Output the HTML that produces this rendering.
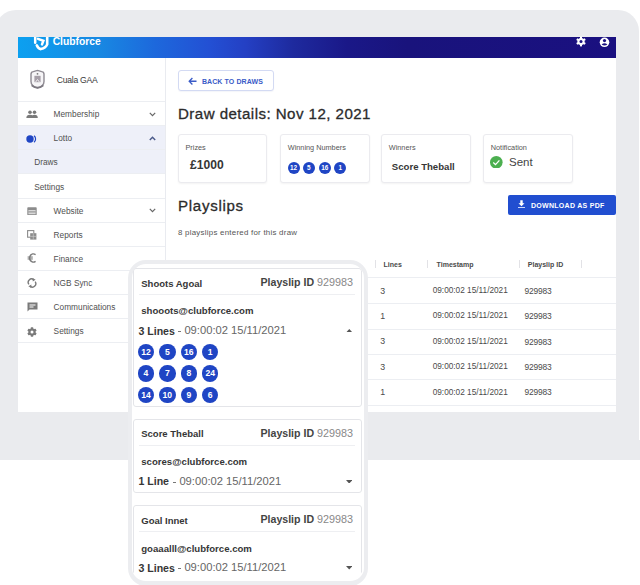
<!DOCTYPE html>
<html><head><meta charset="utf-8">
<style>
*{margin:0;padding:0;box-sizing:border-box}
html,body{width:640px;height:585px;overflow:hidden;background:#fff;font-family:"Liberation Sans",sans-serif;color:#333;position:relative}
.a{position:absolute}
.t{position:absolute;line-height:1;white-space:nowrap}
.ball{position:absolute;border-radius:50%;background:#1f45c4;color:#fff;font-weight:bold;text-align:center}
</style></head><body>
<div class="a" style="left:-5.00px;top:10.00px;width:644.00px;height:450.00px;background:#eaebee;border-radius:21px 21px 0 0"></div>
<div class="a" style="left:0.00px;top:440.00px;width:640.00px;height:20.00px;background:#eaebee"></div>
<div class="a" style="left:18.00px;top:37.00px;width:598.00px;height:375.00px;background:#fff"></div>
<div class="a" style="left:18.00px;top:37.00px;width:598.00px;height:21.00px;background:linear-gradient(90deg,#0ca0f0 0%,#1888e2 13.7%,#1d68dc 23%,#2350d4 32%,#2440c4 38%,#1e2a9e 46%,#1a1888 55%,#19137c 65%,#1a1080 100%)"></div>
<div class="a" style="left:18px;top:37px;width:598px;height:21px;overflow:hidden">
<svg class="a" style="left:10px;top:0px" width="25" height="15" viewBox="28 37 25 15"><g fill="none" stroke="#fff" stroke-linecap="round"><path d="M35.2 36 V42.8" stroke-width="2.5"/><path d="M36.8 45.4 Q38.6 49 40.8 49.1 Q46 47.8 47.2 44.4 V36" stroke-width="2.6"/><path d="M38 38.8 L43.4 40.8 L42 44.4" stroke-width="2.5"/></g></svg>
</div>
<div class="t" style="left:52.70px;top:36.88px;font-size:10.3px;font-weight:bold;color:#fff;">Clubforce</div>
<svg class="a" style="left:575.50px;top:36.00px" width="10" height="11" viewBox="0 0 10 11"><g fill="#fff"><circle cx="5" cy="5.5" r="3.6"/><rect x="4" y="0.6" width="2" height="9.8"/><rect x="4" y="0.6" width="2" height="9.8" transform="rotate(60 5 5.5)"/><rect x="4" y="0.6" width="2" height="9.8" transform="rotate(-60 5 5.5)"/></g><circle cx="5" cy="5.5" r="1.5" fill="#1a1080"/></svg>
<svg class="a" style="left:599.00px;top:36.50px" width="11" height="11" viewBox="0 0 11 11"><circle cx="5.5" cy="5.3" r="4.8" fill="#fff"/><circle cx="5.5" cy="3.6" r="1.6" fill="#1a1080"/><path d="M2.6 7.6 Q5.5 5 8.4 7.6 Q5.5 9.6 2.6 7.6Z" fill="#1a1080"/></svg>
<div class="a" style="left:165.00px;top:58.00px;width:1.00px;height:354.00px;background:#e9ebf0"></div>
<div class="a" style="left:18.00px;top:101.00px;width:147.00px;height:1.00px;background:#eceef2"></div>
<svg class="a" style="left:28px;top:68px" width="20" height="23" viewBox="28 68 20 23"><path d="M31 74.2 Q31 71.8 33.3 71.6 L37.5 70.4 L41.7 71.6 Q44 71.8 44 74.2 V81.5 Q44 86 37.5 88.2 Q31 86 31 81.5 Z" fill="#f6f5f7" stroke="#8e8a92" stroke-width="1.4"/><rect x="34.4" y="75.8" width="6.2" height="6.4" fill="#a69fa8"/><path d="M35.5 82.2 L37.5 79.5 L39.5 82.2" fill="none" stroke="#f6f5f7" stroke-width="0.9"/><circle cx="37.5" cy="73.8" r="0.9" fill="#777"/><path d="M31.6 85.4 Q37.5 90 43.4 85.4" fill="none" stroke="#7c7880" stroke-width="1.7"/></svg>
<div class="t" style="left:56.75px;top:75.92px;font-size:8.6px;color:#3a3a3a;letter-spacing:-0.25px">Cuala GAA</div>
<div class="a" style="left:18.00px;top:125.70px;width:147.00px;height:48.20px;background:#eef0f9"></div>
<div class="a" style="left:18.00px;top:125.20px;width:147.00px;height:1.00px;background:#eceef2"></div>
<div class="t" style="left:53.60px;top:110.27px;font-size:8.3px;color:#505050;">Membership</div>
<div class="a" style="left:18.00px;top:149.30px;width:147.00px;height:1.00px;background:#eceef2"></div>
<div class="t" style="left:53.60px;top:134.37px;font-size:8.3px;color:#505050;">Lotto</div>
<div class="a" style="left:18.00px;top:173.40px;width:147.00px;height:1.00px;background:#eceef2"></div>
<div class="t" style="left:34.20px;top:158.47px;font-size:8.3px;color:#505050;">Draws</div>
<div class="a" style="left:18.00px;top:197.50px;width:147.00px;height:1.00px;background:#eceef2"></div>
<div class="t" style="left:34.20px;top:182.57px;font-size:8.3px;color:#505050;">Settings</div>
<div class="a" style="left:18.00px;top:221.60px;width:147.00px;height:1.00px;background:#eceef2"></div>
<div class="t" style="left:53.60px;top:206.67px;font-size:8.3px;color:#505050;">Website</div>
<div class="a" style="left:18.00px;top:245.70px;width:147.00px;height:1.00px;background:#eceef2"></div>
<div class="t" style="left:53.60px;top:230.77px;font-size:8.3px;color:#505050;">Reports</div>
<div class="a" style="left:18.00px;top:269.80px;width:147.00px;height:1.00px;background:#eceef2"></div>
<div class="t" style="left:53.60px;top:254.87px;font-size:8.3px;color:#505050;">Finance</div>
<div class="a" style="left:18.00px;top:293.90px;width:147.00px;height:1.00px;background:#eceef2"></div>
<div class="t" style="left:53.60px;top:278.97px;font-size:8.3px;color:#505050;">NGB Sync</div>
<div class="a" style="left:18.00px;top:318.00px;width:147.00px;height:1.00px;background:#eceef2"></div>
<div class="t" style="left:53.60px;top:303.07px;font-size:8.3px;color:#505050;">Communications</div>
<div class="a" style="left:18.00px;top:342.10px;width:147.00px;height:1.00px;background:#eceef2"></div>
<div class="t" style="left:53.60px;top:327.17px;font-size:8.3px;color:#505050;">Settings</div>
<svg class="a" style="left:148.50px;top:111.50px" width="7" height="5" viewBox="0 0 7 5"><path d="M0.8 0.8 L3.5 3.6 L6.2 0.8" fill="none" stroke="#666" stroke-width="1.2"/></svg>
<svg class="a" style="left:148.50px;top:135.50px" width="7" height="5" viewBox="0 0 7 5"><path d="M0.8 4 L3.5 1.2 L6.2 4" fill="none" stroke="#4a5a8a" stroke-width="1.4"/></svg>
<svg class="a" style="left:148.50px;top:207.80px" width="7" height="5" viewBox="0 0 7 5"><path d="M0.8 0.8 L3.5 3.6 L6.2 0.8" fill="none" stroke="#666" stroke-width="1.2"/></svg>
<svg class="a" style="left:26.00px;top:110.00px" width="12" height="9" viewBox="0 0 12 9"><g fill="#7a7a7a"><circle cx="4" cy="2.2" r="1.8"/><circle cx="8.5" cy="2.2" r="1.8"/><path d="M0.3 8 Q0.5 4.8 4 4.8 Q7.5 4.8 7.7 8Z"/><path d="M5.5 8 Q5.7 4.8 8.5 4.8 Q11.7 4.8 11.8 8Z"/></g></svg>
<svg class="a" style="left:26.00px;top:134.50px" width="12" height="8" viewBox="0 0 12 8"><circle cx="4" cy="4" r="3.7" fill="#1f45c4"/><path d="M8 0.8 A4 4 0 0 1 8 7.2" fill="none" stroke="#1f45c4" stroke-width="1.2"/></svg>
<svg class="a" style="left:27.00px;top:206.50px" width="10" height="8.5" viewBox="0 0 10 8.5"><rect x="0.3" y="0.3" width="9.4" height="7.9" rx="0.8" fill="#8c8c8c"/><rect x="1.4" y="3" width="7.2" height="4.2" fill="#d8d8d8"/><rect x="1.4" y="4.4" width="7.2" height="1" fill="#8c8c8c"/></svg>
<svg class="a" style="left:27.00px;top:229.50px" width="10" height="10" viewBox="0 0 10 10"><rect x="0.6" y="0.6" width="6.2" height="6.6" fill="none" stroke="#8c8c8c" stroke-width="1.1"/><rect x="3.2" y="3.2" width="6.2" height="6.4" fill="#8c8c8c"/><path d="M3.2 6.4 H9.4 M6.3 3.2 V9.6" stroke="#d0d0d0" stroke-width="0.6"/></svg>
<svg class="a" style="left:27.00px;top:253.00px" width="10" height="10" viewBox="0 0 10 10"><path d="M8.6 1.6 Q7 0.6 5.7 0.9 Q2.6 1.8 2.6 5 Q2.6 8.2 5.7 9.1 Q7 9.4 8.6 8.4" fill="none" stroke="#7a7a7a" stroke-width="1.4"/><rect x="0.6" y="3.5" width="5.2" height="1.1" fill="#7a7a7a"/><rect x="0.6" y="5.4" width="5.2" height="1.1" fill="#7a7a7a"/></svg>
<svg class="a" style="left:27.00px;top:278.00px" width="10" height="10" viewBox="0 0 10 10"><path d="M1.9 6.4 A3.4 3.4 0 0 1 6.6 1.6" fill="none" stroke="#7a7a7a" stroke-width="1.4"/><path d="M8.1 3.6 A3.4 3.4 0 0 1 3.4 8.4" fill="none" stroke="#7a7a7a" stroke-width="1.4"/><path d="M5.6 0 L8.6 1.8 L5.8 3.6Z" fill="#7a7a7a"/><path d="M4.4 6.4 L1.4 8.2 L4.2 10Z" fill="#7a7a7a"/></svg>
<svg class="a" style="left:26.50px;top:302.00px" width="11" height="10" viewBox="0 0 11 10"><path d="M0.5 0.5 H10.5 V7.5 H2.5 L0.5 9.5Z" fill="#7a7a7a"/><rect x="2.5" y="2.5" width="6" height="1" fill="#fff"/><rect x="2.5" y="4.5" width="4" height="1" fill="#fff"/></svg>
<svg class="a" style="left:27.00px;top:326.50px" width="10" height="10" viewBox="0 0 10 10"><g fill="#7a7a7a"><circle cx="5" cy="5" r="3.6"/><rect x="3.7" y="0.3" width="2.6" height="9.4" rx="0.6"/><rect x="3.7" y="0.3" width="2.6" height="9.4" rx="0.6" transform="rotate(60 5 5)"/><rect x="3.7" y="0.3" width="2.6" height="9.4" rx="0.6" transform="rotate(120 5 5)"/></g><circle cx="5" cy="5" r="1.5" fill="#fff"/></svg>
<div class="a" style="left:177.50px;top:70.40px;width:96.50px;height:20.60px;border:1px solid #d3daf3;border-radius:3px;background:#fff;box-shadow:0 1px 1px rgba(60,80,160,0.06)"></div>
<svg class="a" style="left:187.50px;top:76.50px" width="9" height="8.5" viewBox="0 0 9 8.5"><path d="M8.5 4.25 H1.2 M4.4 1 L1.2 4.25 L4.4 7.5" fill="none" stroke="#3a5bc7" stroke-width="1.3"/></svg>
<div class="t" style="left:201.90px;top:77.67px;font-size:7px;font-weight:bold;color:#3a5bc7;letter-spacing:0.1px">BACK TO DRAWS</div>
<div class="t" style="left:178.00px;top:106.22px;font-size:15.1px;color:#2b2b2b;-webkit-text-stroke:0.3px #2b2b2b;letter-spacing:0.45px">Draw details: Nov 12, 2021</div>
<div class="a" style="left:177.70px;top:134.30px;width:89.70px;height:48.40px;border:1px solid #ebebef;border-radius:3px;background:#fff;box-shadow:0 1px 2px rgba(0,0,0,0.05)"></div>
<div class="t" style="left:185.50px;top:143.82px;font-size:7.3px;color:#555;">Prizes</div>
<div class="a" style="left:280.00px;top:134.30px;width:89.70px;height:48.40px;border:1px solid #ebebef;border-radius:3px;background:#fff;box-shadow:0 1px 2px rgba(0,0,0,0.05)"></div>
<div class="t" style="left:287.80px;top:143.82px;font-size:7.3px;color:#555;">Winning Numbers</div>
<div class="a" style="left:381.00px;top:134.30px;width:89.70px;height:48.40px;border:1px solid #ebebef;border-radius:3px;background:#fff;box-shadow:0 1px 2px rgba(0,0,0,0.05)"></div>
<div class="t" style="left:388.80px;top:143.82px;font-size:7.3px;color:#555;">Winners</div>
<div class="a" style="left:483.00px;top:134.30px;width:89.70px;height:48.40px;border:1px solid #ebebef;border-radius:3px;background:#fff;box-shadow:0 1px 2px rgba(0,0,0,0.05)"></div>
<div class="t" style="left:490.80px;top:143.82px;font-size:7.3px;color:#555;">Notification</div>
<div class="t" style="left:190.00px;top:159.06px;font-size:12.1px;font-weight:bold;color:#363636;">£1000</div>
<div class="ball" style="left:287.60px;top:161.90px;width:12px;height:12px;font-size:6.4px;line-height:12.2px">12</div>
<div class="ball" style="left:302.90px;top:161.90px;width:12px;height:12px;font-size:6.4px;line-height:12.2px">5</div>
<div class="ball" style="left:318.80px;top:161.90px;width:12px;height:12px;font-size:6.4px;line-height:12.2px">16</div>
<div class="ball" style="left:334.30px;top:161.90px;width:12px;height:12px;font-size:6.4px;line-height:12.2px">1</div>
<div class="t" style="left:391.80px;top:161.97px;font-size:9.6px;font-weight:bold;color:#363636;">Score Theball</div>
<svg class="a" style="left:490.30px;top:155.60px" width="12.6" height="12.6" viewBox="0 0 12.6 12.6"><circle cx="6.3" cy="6.3" r="6.3" fill="#4caf50"/><path d="M3.3 6.5 L5.5 8.6 L9.4 4.4" fill="none" stroke="#fff" stroke-width="1.3"/></svg>
<div class="t" style="left:509.00px;top:157.27px;font-size:11.5px;color:#444;">Sent</div>
<div class="a" style="left:507.50px;top:194.60px;width:108.50px;height:20.00px;background:#214ed0;border-radius:2px"></div>
<svg class="a" style="left:517.50px;top:199.80px" width="7" height="8.5" viewBox="0 0 7 8.5"><path d="M2.3 0.3 H4.7 V3.3 H6.5 L3.5 6.3 L0.5 3.3 H2.3Z" fill="#fff"/><rect x="0" y="7.1" width="7" height="1.5" fill="#dfe6ff"/></svg>
<div class="t" style="left:531.00px;top:201.77px;font-size:7px;font-weight:bold;color:#fff;letter-spacing:0.28px">DOWNLOAD AS PDF</div>
<div class="t" style="left:178.00px;top:197.82px;font-size:15.1px;color:#2b2b2b;-webkit-text-stroke:0.3px #2b2b2b;letter-spacing:0.7px">Playslips</div>
<div class="t" style="left:178.00px;top:229.01px;font-size:7.9px;color:#555;letter-spacing:0.25px">8 playslips entered for this draw</div>
<div class="a" style="left:375.00px;top:260.30px;width:1.00px;height:7.50px;background:#e2e2e6"></div>
<div class="a" style="left:427.10px;top:260.30px;width:1.00px;height:7.50px;background:#e2e2e6"></div>
<div class="a" style="left:519.20px;top:260.30px;width:1.00px;height:7.50px;background:#e2e2e6"></div>
<div class="a" style="left:581.10px;top:260.30px;width:1.00px;height:7.50px;background:#e2e2e6"></div>
<div class="t" style="left:383.60px;top:260.97px;font-size:7px;font-weight:bold;color:#4a4a4a;">Lines</div>
<div class="t" style="left:436.60px;top:260.97px;font-size:7px;font-weight:bold;color:#4a4a4a;">Timestamp</div>
<div class="t" style="left:527.80px;top:260.97px;font-size:7px;font-weight:bold;color:#4a4a4a;">Playslip ID</div>
<div class="a" style="left:178.00px;top:277.25px;width:438.00px;height:1.00px;background:#eceef2"></div>
<div class="a" style="left:178.00px;top:303.20px;width:438.00px;height:1.00px;background:#eceef2"></div>
<div class="a" style="left:178.00px;top:328.60px;width:438.00px;height:1.00px;background:#eceef2"></div>
<div class="a" style="left:178.00px;top:353.90px;width:438.00px;height:1.00px;background:#eceef2"></div>
<div class="a" style="left:178.00px;top:379.10px;width:438.00px;height:1.00px;background:#eceef2"></div>
<div class="a" style="left:178.00px;top:404.70px;width:438.00px;height:1.00px;background:#eceef2"></div>
<div class="t" style="left:380.20px;top:286.55px;font-size:8.8px;color:#4a4a4a;">3</div>
<div class="t" style="left:432.70px;top:287.02px;font-size:8.25px;color:#4a4a4a;">09:00:02 15/11/2021</div>
<div class="t" style="left:524.40px;top:286.89px;font-size:8.4px;color:#4a4a4a;letter-spacing:-0.15px">929983</div>
<div class="t" style="left:380.20px;top:311.95px;font-size:8.8px;color:#4a4a4a;">1</div>
<div class="t" style="left:432.70px;top:312.42px;font-size:8.25px;color:#4a4a4a;">09:00:02 15/11/2021</div>
<div class="t" style="left:524.40px;top:312.29px;font-size:8.4px;color:#4a4a4a;letter-spacing:-0.15px">929983</div>
<div class="t" style="left:380.20px;top:337.35px;font-size:8.8px;color:#4a4a4a;">3</div>
<div class="t" style="left:432.70px;top:337.82px;font-size:8.25px;color:#4a4a4a;">09:00:02 15/11/2021</div>
<div class="t" style="left:524.40px;top:337.69px;font-size:8.4px;color:#4a4a4a;letter-spacing:-0.15px">929983</div>
<div class="t" style="left:380.20px;top:362.75px;font-size:8.8px;color:#4a4a4a;">3</div>
<div class="t" style="left:432.70px;top:363.22px;font-size:8.25px;color:#4a4a4a;">09:00:02 15/11/2021</div>
<div class="t" style="left:524.40px;top:363.09px;font-size:8.4px;color:#4a4a4a;letter-spacing:-0.15px">929983</div>
<div class="t" style="left:380.20px;top:388.15px;font-size:8.8px;color:#4a4a4a;">1</div>
<div class="t" style="left:432.70px;top:388.62px;font-size:8.25px;color:#4a4a4a;">09:00:02 15/11/2021</div>
<div class="t" style="left:524.40px;top:388.49px;font-size:8.4px;color:#4a4a4a;letter-spacing:-0.15px">929983</div>
<div class="a" style="left:127.50px;top:259.50px;width:240.00px;height:326.00px;border:4px solid #ecedf0;border-bottom-width:5.5px;border-radius:18px;background:#fff"></div>
<div class="a" style="left:0;top:0;width:640px;height:585px;clip-path:inset(263.5px 276.5px 5.5px 131.5px round 14px)">
<div class="a" style="left:132.50px;top:268.00px;width:229.50px;height:139.20px;border:1px solid #e4e5e9;border-radius:3px;background:#fff"></div>
<div class="t" style="left:141.25px;top:278.86px;font-size:9.5px;font-weight:bold;color:#363636;">Shoots Agoal</div>
<div class="t" style="right:286.90px;top:277.06px;font-size:10.8px;color:#888"><b style="color:#444;font-size:10.6px">Playslip ID</b> 929983</div>
<div class="a" style="left:139.00px;top:294.00px;width:216.00px;height:1.00px;background:#eeeff2"></div>
<div class="t" style="left:141.25px;top:306.17px;font-size:9.6px;font-weight:bold;color:#363636;">shooots@clubforce.com</div>
<div class="t" style="left:138.60px;top:325.53px;font-size:10.6px;font-weight:bold;color:#363636;letter-spacing:-0.05px">3 Lines</div>
<div class="a" style="left:178.40px;top:330.90px;width:2.40px;height:1.00px;background:#777"></div>
<div class="t" style="left:184.40px;top:325.02px;font-size:11.2px;color:#666;">09:00:02 15/11/2021</div>
<svg class="a" style="left:345.70px;top:328.50px" width="6.6" height="3.6" viewBox="0 0 6.6 3.6"><path d="M0 3.6 L3.3 0 L6.6 3.6Z" fill="#555"/></svg>
<div class="ball" style="left:137.80px;top:343.90px;width:16.4px;height:16.4px;font-size:8.6px;line-height:16.6px">12</div>
<div class="ball" style="left:159.20px;top:343.90px;width:16.4px;height:16.4px;font-size:8.6px;line-height:16.6px">5</div>
<div class="ball" style="left:180.60px;top:343.90px;width:16.4px;height:16.4px;font-size:8.6px;line-height:16.6px">16</div>
<div class="ball" style="left:202.00px;top:343.90px;width:16.4px;height:16.4px;font-size:8.6px;line-height:16.6px">1</div>
<div class="ball" style="left:137.80px;top:365.20px;width:16.4px;height:16.4px;font-size:8.6px;line-height:16.6px">4</div>
<div class="ball" style="left:159.20px;top:365.20px;width:16.4px;height:16.4px;font-size:8.6px;line-height:16.6px">7</div>
<div class="ball" style="left:180.60px;top:365.20px;width:16.4px;height:16.4px;font-size:8.6px;line-height:16.6px">8</div>
<div class="ball" style="left:202.00px;top:365.20px;width:16.4px;height:16.4px;font-size:8.6px;line-height:16.6px">24</div>
<div class="ball" style="left:137.80px;top:386.50px;width:16.4px;height:16.4px;font-size:8.6px;line-height:16.6px">14</div>
<div class="ball" style="left:159.20px;top:386.50px;width:16.4px;height:16.4px;font-size:8.6px;line-height:16.6px">10</div>
<div class="ball" style="left:180.60px;top:386.50px;width:16.4px;height:16.4px;font-size:8.6px;line-height:16.6px">9</div>
<div class="ball" style="left:202.00px;top:386.50px;width:16.4px;height:16.4px;font-size:8.6px;line-height:16.6px">6</div>
<div class="a" style="left:132.50px;top:418.60px;width:229.50px;height:74.70px;border:1px solid #e4e5e9;border-radius:3px;background:#fff"></div>
<div class="t" style="left:141.25px;top:429.46px;font-size:9.5px;font-weight:bold;color:#363636;">Score Theball</div>
<div class="t" style="right:286.90px;top:427.66px;font-size:10.8px;color:#888"><b style="color:#444;font-size:10.6px">Playslip ID</b> 929983</div>
<div class="a" style="left:139.00px;top:444.60px;width:216.00px;height:1.00px;background:#eeeff2"></div>
<div class="t" style="left:141.25px;top:456.77px;font-size:9.6px;font-weight:bold;color:#363636;">scores@clubforce.com</div>
<div class="t" style="left:138.60px;top:476.13px;font-size:10.6px;font-weight:bold;color:#363636;letter-spacing:-0.05px">1 Line</div>
<div class="a" style="left:173.40px;top:481.50px;width:2.40px;height:1.00px;background:#777"></div>
<div class="t" style="left:179.40px;top:475.62px;font-size:11.2px;color:#666;">09:00:02 15/11/2021</div>
<svg class="a" style="left:345.80px;top:479.50px" width="6.4" height="3.6" viewBox="0 0 6.4 3.6"><path d="M0 0 L3.2 3.6 L6.4 0Z" fill="#555"/></svg>
<div class="a" style="left:132.50px;top:505.40px;width:229.50px;height:94.60px;border:1px solid #e4e5e9;border-radius:3px;background:#fff"></div>
<div class="t" style="left:141.25px;top:516.26px;font-size:9.5px;font-weight:bold;color:#363636;">Goal Innet</div>
<div class="t" style="right:286.90px;top:514.46px;font-size:10.8px;color:#888"><b style="color:#444;font-size:10.6px">Playslip ID</b> 929983</div>
<div class="a" style="left:139.00px;top:531.40px;width:216.00px;height:1.00px;background:#eeeff2"></div>
<div class="t" style="left:141.25px;top:543.57px;font-size:9.6px;font-weight:bold;color:#363636;">goaaalll@clubforce.com</div>
<div class="t" style="left:138.60px;top:562.93px;font-size:10.6px;font-weight:bold;color:#363636;letter-spacing:-0.05px">3 Lines</div>
<div class="a" style="left:178.40px;top:568.30px;width:2.40px;height:1.00px;background:#777"></div>
<div class="t" style="left:184.40px;top:562.42px;font-size:11.2px;color:#666;">09:00:02 15/11/2021</div>
<svg class="a" style="left:345.80px;top:566.30px" width="6.4" height="3.6" viewBox="0 0 6.4 3.6"><path d="M0 0 L3.2 3.6 L6.4 0Z" fill="#555"/></svg>
</div>
</body></html>
